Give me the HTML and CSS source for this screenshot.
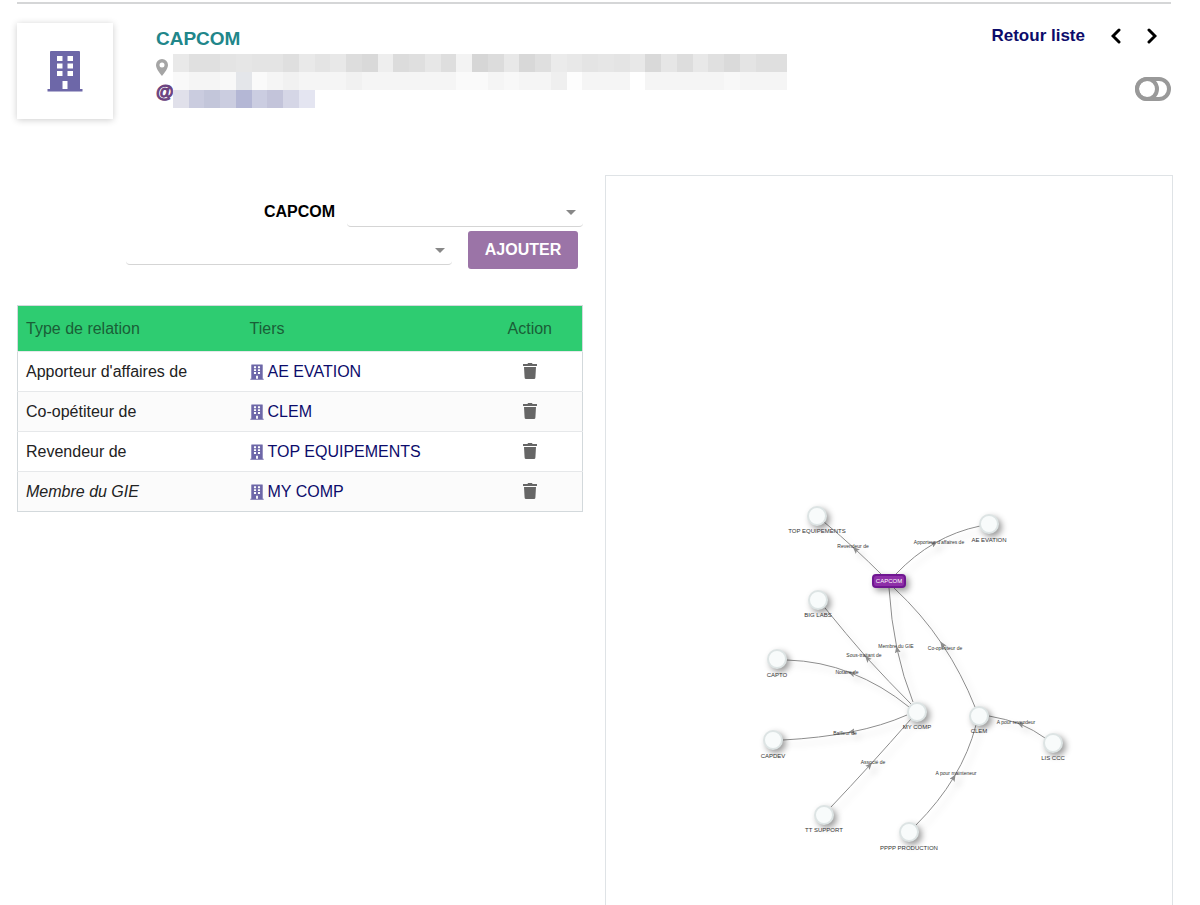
FILE: index.html
```html
<!DOCTYPE html>
<html lang="fr">

<head>
  <meta charset="utf-8" />
  <title>CAPCOM</title>
  <link rel="stylesheet" href="styles.css">
</head>

<body>
  <svg class="defs" width="0" height="0" aria-hidden="true">
    <symbol id="building" viewBox="0 0 36 42">
      <path fill-rule="evenodd" d="M4 1h28a1 1 0 0 1 1 1v37h2.500v2.500H.500V39H3V2a1 1 0 0 1 1-1zM10 6v5h5.500V6zM20.500 6v5H26V6zM10 13.500v5h5.500v-5zM20.500 13.500v5H26v-5zM10 21v5h5.500v-5zM20.500 21v5H26v-5zM15.500 31v8h5v-8z" />
    </symbol>
    <symbol id="trash" viewBox="0 0 14 16">
      <path d="M0 1h4.500l.500-1h4l.500 1H14v2H0zM1 4h12l-.600 10.500a1.500 1.500 0 0 1-1.500 1.500H3.100a1.500 1.500 0 0 1-1.500-1.500z" />
    </symbol>
  </svg>

  <header class="header">
    <div class="logo">
      <svg class="logo-icon"><use href="#building" /></svg>
    </div>
    <div class="info">
      <h1>CAPCOM</h1>
      <div class="contact">
        <div class="contact-icons">
          <svg class="pin" viewBox="0 0 12 17"><path fill-rule="evenodd" d="M6 0a6 6 0 0 1 6 6c0 3.500-3.500 8-6 11C3.500 14 0 9.500 0 6a6 6 0 0 1 6-6zM6 3.500a2.500 2.500 0 1 0 0 5 2.500 2.500 0 0 0 0-5z" /></svg>
          <span class="at">@</span>
        </div>
        <svg class="masked" viewBox="0 0 39 3" preserveAspectRatio="none" shape-rendering="crispEdges">
          <!-- adresse -->
          <rect x="0" width="39" height="1" fill="#e4e4e4" />
          <rect x="0" width="1" height="1" fill="#e9e9e9" />
          <rect x="1" width="2" height="1" fill="#e0e0e0" />
          <rect x="4" width="1" height="1" fill="#e6e6e6" />
          <rect x="7" width="1" height="1" fill="#dfdfdf" />
          <rect x="8" width="1" height="1" fill="#e9e9e9" />
          <rect x="10" width="1" height="1" fill="#e8e8e8" />
          <rect x="11" width="1" height="1" fill="#dddddd" />
          <rect x="12" width="1" height="1" fill="#d9d9d9" />
          <rect x="13" width="1" height="1" fill="#eeeeee" />
          <rect x="14" width="1" height="1" fill="#dcdcdc" />
          <rect x="15" width="1" height="1" fill="#dfdfdf" />
          <rect x="16" width="1" height="1" fill="#e7e7e7" />
          <rect x="17" width="1" height="1" fill="#dedede" />
          <rect x="18" width="1" height="1" fill="#f3f3f3" />
          <rect x="19" width="1" height="1" fill="#d6d6d6" />
          <rect x="20" width="1" height="1" fill="#dcdcdc" />
          <rect x="21" width="1" height="1" fill="#e8e8e8" />
          <rect x="22" width="1" height="1" fill="#d8d8d8" />
          <rect x="23" width="1" height="1" fill="#dfdfdf" />
          <rect x="24" width="1" height="1" fill="#ebebeb" />
          <rect x="25" width="1" height="1" fill="#e8e8e8" />
          <rect x="27" width="1" height="1" fill="#e6e6e6" />
          <rect x="29" width="1" height="1" fill="#e8e8e8" />
          <rect x="30" width="1" height="1" fill="#d9d9d9" />
          <rect x="31" width="1" height="1" fill="#e6e6e6" />
          <rect x="32" width="1" height="1" fill="#dddddd" />
          <rect x="33" width="1" height="1" fill="#e8e8e8" />
          <rect x="34" width="1" height="1" fill="#e0e0e0" />
          <rect x="35" width="1" height="1" fill="#dadada" />
          <rect x="37" width="2" height="1" fill="#dfdfdf" />
          <rect x="0" y="1" width="39" height="1" fill="#f5f5f5" />
          <rect x="0" y="1" width="1" height="1" fill="#f9f9f9" />
          <rect x="3" y="1" width="1" height="1" fill="#f8f8f8" />
          <rect x="4" y="1" width="1" height="1" fill="#e4e6ea" />
          <rect x="5" y="1" width="1" height="1" fill="#fafafa" />
          <rect x="7" y="1" width="1" height="1" fill="#f1f1f1" />
          <rect x="11" y="1" width="1" height="1" fill="#f1f1f1" />
          <rect x="18" y="1" width="2" height="1" fill="#fafafa" />
          <rect x="21" y="1" width="1" height="1" fill="#f8f8f8" />
          <rect x="24" y="1" width="1" height="1" fill="#efefef" />
          <rect x="25" y="1" width="1" height="1" fill="#fdfdfd" />
          <rect x="29" y="1" width="1" height="1" fill="#ffffff" />
          <rect x="35" y="1" width="1" height="1" fill="#f8f8f8" />
          <!-- e-mail -->
          <rect x="0" y="2" width="1" height="1" fill="#e0e0ea" />
          <rect x="1" y="2" width="1" height="1" fill="#caccdf" />
          <rect x="2" y="2" width="1" height="1" fill="#c3c6da" />
          <rect x="3" y="2" width="1" height="1" fill="#cbcde0" />
          <rect x="4" y="2" width="1" height="1" fill="#b4b7d5" />
          <rect x="5" y="2" width="1" height="1" fill="#cbcde1" />
          <rect x="6" y="2" width="1" height="1" fill="#c3c4da" />
          <rect x="7" y="2" width="1" height="1" fill="#d5d6e6" />
          <rect x="8" y="2" width="1" height="1" fill="#e4e5f1" />
        </svg>
      </div>
    </div>
    <div class="tools">
      <nav class="pager">
        <a href="#">Retour liste</a>
        <a href="#" aria-label="Précédent"><svg class="chevron" viewBox="0 0 10 16"><path d="M8 2 2 8l6 6" /></svg></a>
        <a href="#" aria-label="Suivant"><svg class="chevron" viewBox="0 0 10 16"><path d="M2 2l6 6-6 6" /></svg></a>
      </nav>
      <button type="button" class="toggle" aria-label="Statut">
        <svg viewBox="0 0 36 24"><rect x="2" y="2" width="32" height="20" rx="10" /><circle cx="12" cy="12" r="10" /></svg>
      </button>
    </div>
  </header>

  <main class="content">
    <section>
      <form class="add-form">
        <div class="line">
          <label for="relation">CAPCOM</label>
          <div class="select relation">
            <select id="relation"><option></option></select>
          </div>
        </div>
        <div class="line line-add">
          <div class="select tiers">
            <select aria-label="Tiers"><option></option></select>
          </div>
          <button type="button" class="btn">AJOUTER</button>
        </div>
      </form>

      <table class="relations">
        <thead>
          <tr>
            <th class="col-type">Type de relation</th>
            <th>Tiers</th>
            <th class="col-action">Action</th>
          </tr>
        </thead>
        <tbody>
          <tr>
            <td>Apporteur d'affaires de</td>
            <td><a href="#"><svg><use href="#building" /></svg>AE EVATION</a></td>
            <td class="col-action"><button type="button" aria-label="Supprimer"><svg><use href="#trash" /></svg></button></td>
          </tr>
          <tr>
            <td>Co-opétiteur de</td>
            <td><a href="#"><svg><use href="#building" /></svg>CLEM</a></td>
            <td class="col-action"><button type="button" aria-label="Supprimer"><svg><use href="#trash" /></svg></button></td>
          </tr>
          <tr>
            <td>Revendeur de</td>
            <td><a href="#"><svg><use href="#building" /></svg>TOP EQUIPEMENTS</a></td>
            <td class="col-action"><button type="button" aria-label="Supprimer"><svg><use href="#trash" /></svg></button></td>
          </tr>
          <tr>
            <td><em>Membre du GIE</em></td>
            <td><a href="#"><svg><use href="#building" /></svg>MY COMP</a></td>
            <td class="col-action"><button type="button" aria-label="Supprimer"><svg><use href="#trash" /></svg></button></td>
          </tr>
        </tbody>
      </table>
    </section>

    <section class="graph">
      <svg viewBox="606 176 566 729">
        <defs>
          <marker id="arrow" viewBox="0 0 7 6" refX="4" refY="3" markerWidth="7" markerHeight="6" markerUnits="userSpaceOnUse" orient="auto">
            <path d="M0 0l7 3-7 3 1.500-3z" />
          </marker>
        </defs>
        <!-- each link is two half curves, the arrow sits on the joint -->
        <g class="links">
          <path d="M881 574Q869 562 855 549" marker-end="url(#arrow)" /><path d="M855 549Q841 536 824 522" />
          <path d="M896 574Q914 555 935 543" marker-end="url(#arrow)" /><path d="M935 543Q956 531 980 526" />
          <path d="M911 704Q889 682 867 658" marker-end="url(#arrow)" /><path d="M867 658Q846 634 825 608" />
          <path d="M909 707Q882 685 851 673" marker-end="url(#arrow)" /><path d="M851 673Q821 661 787 660" />
          <path d="M907 715Q882 726 851 732" marker-end="url(#arrow)" /><path d="M851 732Q820 738 783 740" />
          <path d="M831 807Q850 787 870 765" marker-end="url(#arrow)" /><path d="M870 765Q890 743 911 719" />
          <path d="M916 825Q939 802 954 777" marker-end="url(#arrow)" /><path d="M954 777Q969 752 976 725" />
          <path d="M1045 738Q1034 730 1020 724" marker-end="url(#arrow)" /><path d="M1020 724Q1006 719 989 716" />
          <path d="M975 707Q962 674 942 644" marker-end="url(#arrow)" /><path d="M942 644Q922 614 894 588" />
          <path d="M913 702Q903 677 897 649" marker-end="url(#arrow)" /><path d="M897 649Q891 620 889 588" />
        </g>
        <g class="nodes">
          <circle cx="817" cy="516" r="9" />
          <circle cx="989" cy="524" r="9" />
          <circle cx="818" cy="600" r="9" />
          <circle cx="777" cy="659" r="9" />
          <circle cx="917" cy="712" r="9" />
          <circle cx="979" cy="716" r="9" />
          <circle cx="1053" cy="743" r="9" />
          <circle cx="773" cy="740" r="9" />
          <circle cx="824" cy="815" r="9" />
          <circle cx="909" cy="832" r="9" />
          <rect x="873" y="575" width="32" height="12" rx="3" />
        </g>
        <g class="names">
          <text x="817" y="533">TOP EQUIPEMENTS</text>
          <text x="989" y="542">AE EVATION</text>
          <text x="818" y="617">BIG LABS</text>
          <text x="777" y="677">CAPTO</text>
          <text x="917" y="729">MY COMP</text>
          <text x="979" y="733">CLEM</text>
          <text x="1053" y="760">LIS CCC</text>
          <text x="773" y="758">CAPDEV</text>
          <text x="824" y="832">TT SUPPORT</text>
          <text x="909" y="850">PPPP PRODUCTION</text>
          <text x="889" y="583" class="current">CAPCOM</text>
        </g>
        <g class="types">
          <text x="853" y="548">Revendeur de</text>
          <text x="939" y="544">Apporteur d'affaires de</text>
          <text x="896" y="648">Membre du GIE</text>
          <text x="864" y="657">Sous-traitant de</text>
          <text x="847" y="674">Notaire de</text>
          <text x="845" y="735">Bailleur de</text>
          <text x="873" y="764">Associé de</text>
          <text x="945" y="650">Co-opétiteur de</text>
          <text x="1016" y="724">A pour revendeur</text>
          <text x="956" y="775">A pour mainteneur</text>
        </g>
      </svg>
    </section>
  </main>
</body>

</html>
```
FILE: styles.css
```css
* {
  box-sizing: border-box;
}

body {
  margin: 0;
  padding: 2px 27px 0 17px;
  background: #fff;
  color: #222;
  font-family: "Liberation Sans", Arial, sans-serif;
  font-size: 16px;
  line-height: 20px;
}

a {
  color: #0c0c6b;
  text-decoration: none;
}

button {
  padding: 0;
  border: 0;
  background: none;
  font-family: inherit;
  cursor: pointer;
}

svg {
  display: block;
}

.defs {
  position: absolute;
}

.header {
  display: flex;
  margin-right: 2px;
  padding-top: 19px;
  border-top: 2px solid #d5d6d7;
}

.logo {
  display: flex;
  align-items: center;
  justify-content: center;
  width: 96px;
  height: 96px;
  box-shadow: 0 1px 7px rgba(0, 0, 0, 0.2);
}

.logo-icon {
  width: 36px;
  height: 42px;
  fill: #6d67a8;
}

.info {
  flex: 1;
  padding: 6px 0 0 43px;
}

h1 {
  margin: 0 0 5px;
  color: #21868a;
  font-size: 19px;
  line-height: 20px;
}

.contact {
  display: flex;
}

.contact-icons {
  width: 17px;
  padding-top: 5px;
}

.pin {
  width: 12px;
  height: 17px;
  fill: #a5a5a5;
}

.at {
  display: block;
  margin-top: 6px;
  color: #6b4380;
  font-size: 18px;
  font-weight: bold;
  line-height: 20px;
  -webkit-text-stroke: 1px #6b4380;
}

.masked {
  width: 614px;
  height: 54px;
}

.tools {
  display: flex;
  flex-direction: column;
  align-items: flex-end;
}

.pager {
  display: flex;
  align-items: center;
  gap: 26px;
  padding: 3px 14px 0 0;
  font-size: 17px;
  font-weight: bold;
}

.chevron {
  width: 10px;
  height: 16px;
  fill: none;
  stroke: #000;
  stroke-width: 3;
  stroke-linecap: round;
}

.toggle {
  margin-top: 31px;
}

.toggle svg {
  width: 36px;
  height: 24px;
  fill: none;
  stroke: #999;
  stroke-width: 4;
}

.content {
  display: grid;
  grid-template-columns: 566fr 568fr;
  gap: 22px;
  margin-top: 56px;
}

.add-form {
  display: flex;
  flex-direction: column;
  gap: 4px;
  padding-top: 18px;
}

.line {
  display: flex;
  align-items: center;
  justify-content: flex-end;
  gap: 12px;
}

.line label {
  padding-top: 4px;
  color: #000;
  font-weight: bold;
}

.line-add {
  align-items: flex-start;
  gap: 16px;
  padding-right: 5px;
}

.select {
  position: relative;
}

.relation {
  width: 236px;
}

.tiers {
  width: 326px;
}

.select select {
  display: block;
  width: 100%;
  height: 34px;
  border: 0;
  border-bottom: 1px solid #d5d5d5;
  border-radius: 4px;
  background: transparent;
  appearance: none;
}

.select::after {
  content: "";
  position: absolute;
  top: 17px;
  right: 7px;
  border: 5px solid transparent;
  border-top-color: #888;
  border-bottom: 0;
  pointer-events: none;
}

.btn {
  width: 110px;
  height: 38px;
  border-radius: 3px;
  background: #9b74a7;
  color: #fff;
  font-size: 16px;
  font-weight: bold;
}

.relations {
  width: 100%;
  margin-top: 36px;
  border: 1px solid #d3d9dc;
  border-collapse: collapse;
  table-layout: fixed;
}

.relations th {
  height: 46px;
  padding: 0 8px;
  background: #2ecc71;
  color: #1a5e37;
  font-weight: normal;
  text-align: left;
}

.relations td {
  height: 40px;
  padding: 0 8px;
  border-top: 1px solid #e6e8ea;
}

.relations tbody tr:nth-child(even) {
  background: #fbfbfb;
}

.relations .col-type {
  width: 224px;
}

.relations .col-action {
  width: 105px;
  text-align: center;
}

.relations td a {
  display: flex;
  align-items: center;
  gap: 4px;
}

.relations td a svg {
  width: 14px;
  height: 16px;
  fill: #6d67a8;
}

.relations td button {
  display: inline-block;
  padding-bottom: 2px;
  vertical-align: middle;
}

.relations td button svg {
  width: 14px;
  height: 16px;
  fill: #666;
}

.graph {
  border: 1px solid #dfe3e6;
  border-bottom: 0;
}

.graph svg {
  width: 100%;
  height: auto;
}

.links path {
  fill: none;
  stroke: #8c8c8c;
  stroke-width: 1;
}

.links {
  filter: drop-shadow(5px 5px 3px rgba(0, 0, 0, 0.15));
}

#arrow path {
  fill: #8c8c8c;
  stroke: none;
}

.nodes {
  fill: #f8fbfb;
  stroke: #dde4e4;
  stroke-width: 2;
  filter: drop-shadow(3px 3px 3px rgba(0, 0, 0, 0.4));
}

.nodes rect {
  fill: #8e2fa8;
  stroke: #6f1691;
}

.names text,
.types text {
  fill: #333;
  font-size: 6px;
  text-anchor: middle;
}

.types text {
  font-size: 5px;
}

.names .current {
  fill: #fff;
}
```
